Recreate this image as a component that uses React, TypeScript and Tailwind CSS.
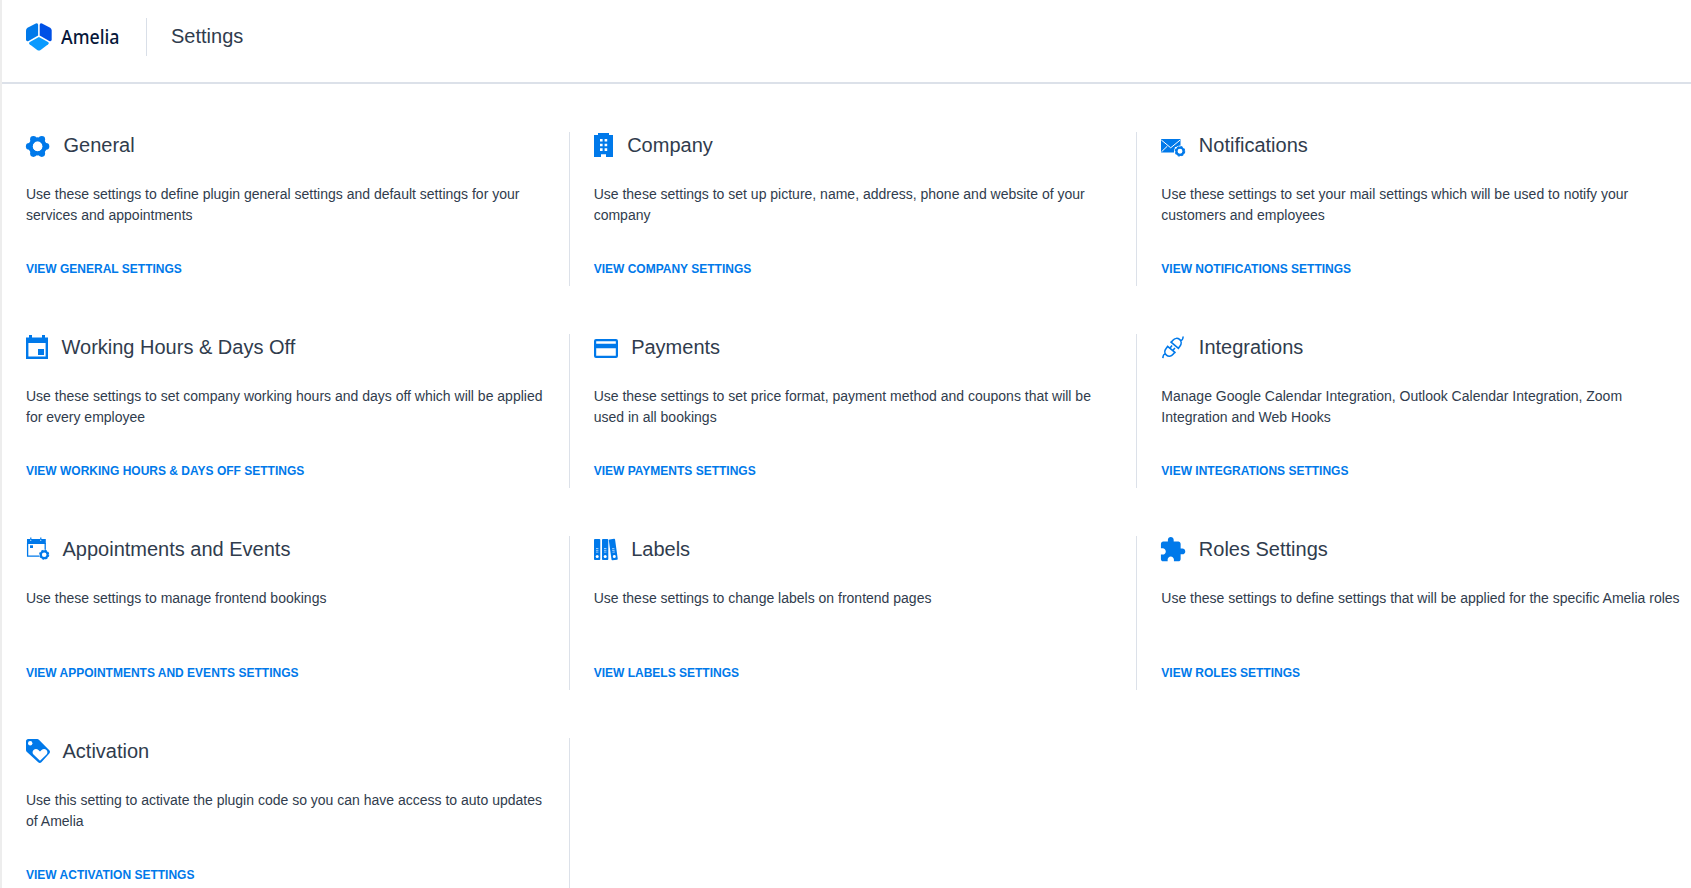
import type { ReactNode } from 'react'

/* ─── Types ─────────────────────────────────────────────────────────────── */

interface SettingsSection {
  title: string
  lines: string[]
  link: string
  icon: ReactNode
}

/* ─── Icons ─────────────────────────────────────────────────────────────── */

const BLUE = '#0079ea'

function Icon({ width, children }: { width: number; children: ReactNode }) {
  return (
    <svg width={width} height="24" viewBox={`0 0 ${width} 24`} fill={BLUE} className="shrink-0 overflow-visible">
      {children}
    </svg>
  )
}

const GearIcon = (
  <Icon width={24}>
    <circle cx="11.6" cy="13.4" r="6.9" fill="none" stroke={BLUE} strokeWidth="4.6" />
    <circle cx="20" cy="13.4" r="3.3" />
    <circle cx="15.8" cy="6.2" r="3.3" />
    <circle cx="7.4" cy="6.2" r="3.3" />
    <circle cx="3.2" cy="13.4" r="3.3" />
    <circle cx="7.4" cy="20.6" r="3.3" />
    <circle cx="15.8" cy="20.6" r="3.3" />
    <circle cx="11.6" cy="13.4" r="4.8" fill="#fff" />
  </Icon>
)

const BuildingIcon = (
  <Icon width={20}>
    <path
      fillRule="evenodd"
      d="M4 0h11v2h4v22h-7v-2.7H7V24H0V2h4zM6 6v2.6h2.6V6zM10.6 6v2.6h2.6V6zM6 10.7v2.6h2.6v-2.6zM10.6 10.7v2.6h2.6v-2.6zM6 15.3v2.6h2.6v-2.6zM10.6 15.3v2.6h2.6v-2.6z"
    />
  </Icon>
)

const MailIcon = (
  <Icon width={24}>
    <path d="M0 6h19.5v8H14l-1 5.5H0z" />
    <path d="M.3 7l9.4 7.8L19.2 7M.5 18.8l5.8-5.6" fill="none" stroke="#fff" strokeWidth="1" />
    <circle cx="19" cy="18.3" r="5.8" fill="#fff" />
    <circle cx="19" cy="18.3" r="3.6" fill="none" stroke={BLUE} strokeWidth="2.3" />
    <circle cx="19" cy="18.3" r="4.7" fill="none" stroke={BLUE} strokeWidth="1.1" strokeDasharray="2.2 1.49" />
  </Icon>
)

const CalendarIcon = (
  <Icon width={22}>
    <path
      fillRule="evenodd"
      d="M3 0h3v2.6h10V0h3v2.6h3V24H0V2.6h3zM2.4 8v13.6h17.2V8z"
    />
    <path d="M12 14h6v6h-6z" />
  </Icon>
)

const CardIcon = (
  <Icon width={24}>
    <path
      fillRule="evenodd"
      d="M2 4h20a2 2 0 0 1 2 2v15a2 2 0 0 1-2 2H2a2 2 0 0 1-2-2V6a2 2 0 0 1 2-2zM2.2 6.3v2.4h19.6V6.3zM2.2 13.3v7.4h19.6v-7.4z"
    />
  </Icon>
)

// Both halves of the connector share one cup, mirrored along the diagonal
const PlugIcon = (
  <Icon width={24}>
    <g transform="translate(12 12.3) rotate(-50)" fill="none" stroke={BLUE} strokeWidth="1.6">
      <path d="M2.7-5.6V5.6M2.7-4.6H5C8.400-4.600 10.200-2.400 10.200 0S8.400 4.600 5 4.600H2.700M9.800 1.400C11.600 3 12.600 2.400 14.800 .8" />
      <path d="M-2.700-5.600V5.600M-2.700-4.600H-5C-8.400-4.600-10.200-2.400-10.200 0S-8.400 4.600-5 4.600H-2.700M-9.800-1.400C-11.600-3-12.600-2.400-14.800-.8" />
      <path d="M-2.700-1.900H.8M-2.700 1.900H.8" />
    </g>
  </Icon>
)

const CalendarGearIcon = (
  <Icon width={23}>
    <path d="M1 2h3v2h1.400V2h8.600v2h1.400V2H19.800v5H1zM4.200 .4h1.200v3H4.200zM14.200.4h1.200v3h-1.200z" />
    <path d="M1.600 6v13.200h12.400M19.200 6v7.200" fill="none" stroke={BLUE} strokeWidth="1.300" />
    <path d="M4 8.300h3V11H4z" />
    <circle cx="18.200" cy="17.700" r="5.300" fill="#fff" />
    <circle cx="18.200" cy="17.700" r="3.400" fill="none" stroke={BLUE} strokeWidth="2.200" />
    <circle cx="18.200" cy="17.700" r="4.500" fill="none" stroke={BLUE} strokeWidth="1.100" strokeDasharray="2.100 1.430" />
  </Icon>
)

const Binder = () => (
  <>
    <rect width="6.3" height="21" rx="0.9" />
    <path d="M2 9.5h2.4M2 11.3h2.4M2 13.1h2.4" stroke="#9dcdfa" strokeWidth="1" />
    <circle cx="3.2" cy="17.6" r="1.5" fill="#fff" />
  </>
)

const BindersIcon = (
  <Icon width={24}>
    <g transform="translate(0 2)"><Binder /></g>
    <g transform="translate(8 2)"><Binder /></g>
    <g transform="translate(14.7 2.6) rotate(-8)"><Binder /></g>
  </Icon>
)

const PuzzleIcon = (
  <Icon width={24}>
    <path
      transform="translate(-2.4 -1.2) scale(1.16)"
      d="M20.5 11H19V7c0-1.1-.9-2-2-2h-4V3.5C13 2.120 11.880 1 10.500 1S8 2.120 8 3.500V5H4c-1.100 0-1.990.9-1.990 2v3.800H3.500c1.490 0 2.700 1.210 2.700 2.700s-1.210 2.700-2.700 2.700H2V20c0 1.100.9 2 2 2h3.800v-1.500c0-1.490 1.210-2.700 2.700-2.700 1.490 0 2.700 1.210 2.700 2.700V22H17c1.100 0 2-.9 2-2v-4h1.500c1.380 0 2.500-1.120 2.500-2.500S21.880 11 20.500 11z"
    />
  </Icon>
)

const LoyaltyIcon = (
  <Icon width={23}>
    <path d="M2.200 0H11.200c.7 0 1.200.2 1.700.7L23.300 11.300c.9.900.9 2.300 0 3.200L15.400 23.300c-.9.900-2.300.9-3.200 0L.7 12.700C.2 12.200 0 11.700 0 11V2.200C0 1 1 0 2.200 0z" />
    <circle cx="4.2" cy="4.2" r="2.2" fill="#fff" />
    <path
      d="M14 21.800L7.500 15.600C6.200 14.200 6.300 12.200 7.600 11C9 9.700 11.200 9.900 12.400 11.100L14 12.500L15.600 11.100C16.800 9.900 19 9.700 20.400 11C21.700 12.200 21.800 14.200 20.500 15.600z"
      fill="#fff"
    />
  </Icon>
)

/* ─── Sections ──────────────────────────────────────────────────────────── */

const SECTIONS: SettingsSection[] = [
  {
    title: 'General',
    lines: [
      'Use these settings to define plugin general settings and default settings for your',
      'services and appointments',
    ],
    link: 'View General Settings',
    icon: GearIcon,
  },
  {
    title: 'Company',
    lines: ['Use these settings to set up picture, name, address, phone and website of your', 'company'],
    link: 'View Company Settings',
    icon: BuildingIcon,
  },
  {
    title: 'Notifications',
    lines: [
      'Use these settings to set your mail settings which will be used to notify your',
      'customers and employees',
    ],
    link: 'View Notifications Settings',
    icon: MailIcon,
  },
  {
    title: 'Working Hours & Days Off',
    lines: [
      'Use these settings to set company working hours and days off which will be applied',
      'for every employee',
    ],
    link: 'View Working Hours & Days Off Settings',
    icon: CalendarIcon,
  },
  {
    title: 'Payments',
    lines: [
      'Use these settings to set price format, payment method and coupons that will be',
      'used in all bookings',
    ],
    link: 'View Payments Settings',
    icon: CardIcon,
  },
  {
    title: 'Integrations',
    lines: [
      'Manage Google Calendar Integration, Outlook Calendar Integration, Zoom',
      'Integration and Web Hooks',
    ],
    link: 'View Integrations Settings',
    icon: PlugIcon,
  },
  {
    title: 'Appointments and Events',
    lines: ['Use these settings to manage frontend bookings'],
    link: 'View Appointments and Events Settings',
    icon: CalendarGearIcon,
  },
  {
    title: 'Labels',
    lines: ['Use these settings to change labels on frontend pages'],
    link: 'View Labels Settings',
    icon: BindersIcon,
  },
  {
    title: 'Roles Settings',
    lines: ['Use these settings to define settings that will be applied for the specific Amelia roles'],
    link: 'View Roles Settings',
    icon: PuzzleIcon,
  },
  {
    title: 'Activation',
    lines: [
      'Use this setting to activate the plugin code so you can have access to auto updates',
      'of Amelia',
    ],
    link: 'View Activation Settings',
    icon: LoyaltyIcon,
  },
]

/* ─── Header ────────────────────────────────────────────────────────────── */

function Logo() {
  return (
    <div className="flex items-center">
      <svg width="26" height="28" viewBox="0 0 26 28">
        <path d="M9.800 .4Q12 -.3 12.100 1.800V12.600L2.600 18Q0 19 0 16.200V7.500Q0 5.700 1.500 4.800z" fill="#0079ea" />
        <path d="M16 .4Q13.800 -.3 13.700 1.800V12.600L23.200 18Q25.700 19 25.700 16.200V7.500Q25.700 5.700 24.200 4.800z" fill="#0050e6" />
        <path d="M12.900 14L22 18.900Q23.400 20 22.200 21.300L14.600 27Q12.900 28.200 11.200 27L3.600 21.300Q2.400 20 3.800 18.900z" fill="#0a9bff" />
      </svg>
      <span className="ml-[9px] w-[58px] origin-left scale-x-[0.89] font-['Noto_Sans','Open_Sans',sans-serif] text-[20px] leading-7 font-medium whitespace-nowrap text-[#06173a]">
        Amelia
      </span>
    </div>
  )
}

function Header() {
  return (
    <header className="flex h-21 items-start border-b-2 border-[#dce1e9] pt-[18px] pl-6">
      <div className="flex h-[38px] items-center">
        <Logo />
        <div className="ml-[27px] h-[38px] w-px bg-[#d9dfe8]" />
        <h1 className="ml-6 pb-0.5 text-[20px] leading-7 text-[#303c4d]">Settings</h1>
      </div>
    </header>
  )
}

/* ─── Settings card ─────────────────────────────────────────────────────── */

function SettingsCard({ title, lines, link, icon, last }: SettingsSection & { last: boolean }) {
  return (
    <section className={`h-[154px] pl-6 ${last ? '' : 'border-r border-[#dce1e9]'}`}>
      <div className="flex h-[52px] items-start gap-[13.5px] pt-px">
        {icon}
        <h2 className="text-[20px] leading-6 whitespace-nowrap">{title}</h2>
      </div>
      <div className="h-[75px] text-[14px] leading-[21px] whitespace-nowrap">
        {lines.map((line) => (
          <p key={line}>{line}</p>
        ))}
      </div>
      <a href="#" className="block text-[12px] leading-[21px] font-bold whitespace-nowrap text-[#0079ea] uppercase">
        {link}
      </a>
    </section>
  )
}

export default function App() {
  return (
    <div className="h-[888px] w-[1691px] overflow-hidden border-l-2 border-[#ededed] bg-white font-['Liberation_Sans',Arial,sans-serif] text-[#303c4d]">
      <Header />
      <main className="grid w-[1703px] grid-cols-3 gap-y-12 pt-12">
        {SECTIONS.map((section, i) => (
          <SettingsCard key={section.title} {...section} last={i % 3 === 2} />
        ))}
      </main>
    </div>
  )
}
